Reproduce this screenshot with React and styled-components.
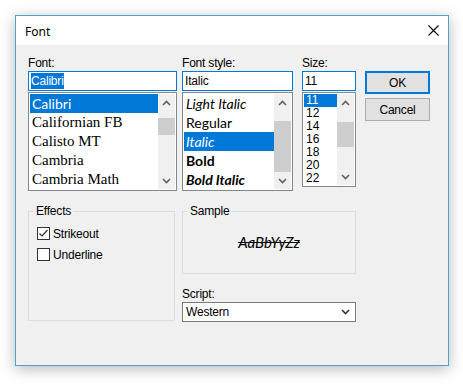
import React from "react";
import styled, { createGlobalStyle, css } from "styled-components";

const GlobalStyle = createGlobalStyle`
  html, body { margin: 0; padding: 0; background: #ffffff; }
  body {
    font-family: "Liberation Sans", Arial, sans-serif;
    font-size: 12px;
    color: #000;
  }
`;

const Page = styled.div`
  padding: 15px 0 0 15px;
  width: 463px;
  height: 384px;
  box-sizing: border-box;
`;

const Window = styled.div`
  width: 434px;
  height: 351px;
  box-sizing: border-box;
  border: 1px solid #4aa6c9;
  background: #f0f0f0;
  box-shadow: 0 3px 14px rgba(0, 0, 0, 0.28);
  display: flex;
  flex-direction: column;
`;

const TitleBar = styled.div`
  height: 29px;
  background: #fff;
  display: flex;
  align-items: center;
  justify-content: space-between;
  padding: 0 9px 0 9px;
  font-size: 12px;
`;

const Title = styled.span`
  font-family: "Noto Sans", "Liberation Sans", sans-serif;
  font-size: 12px;
  padding-top: 1px;
`;

const Content = styled.div`
  padding: 11px 0 0 12px;
  display: flex;
  flex-direction: column;
`;

const TopRow = styled.div`
  display: flex;
  align-items: flex-start;
`;

const Column = styled.div`
  width: ${(p) => p.$w}px;
  margin-right: ${(p) => p.$gap || 0}px;
  display: flex;
  flex-direction: column;
`;

const Label = styled.div`
  height: 15px;
  line-height: 14px;
  letter-spacing: -0.2px;
`;

const Input = styled.div`
  height: 20px;
  box-sizing: border-box;
  border: 1px solid #0078d7;
  background: #fff;
  padding: 0 2px;
  display: flex;
  align-items: center;
  letter-spacing: -0.2px;
`;

const Selected = styled.span`
  background: #0078d7;
  color: #fff;
  padding: 1px 0;
`;

const ListBox = styled.div`
  margin-top: 1px;
  height: ${(p) => p.$h}px;
  box-sizing: border-box;
  border: 1px solid #828790;
  background: #fff;
  padding: 1px;
  display: flex;
`;

const Rows = styled.div`
  flex: 1;
  overflow: hidden;
`;

const Row = styled.div`
  height: ${(p) => p.$h}px;
  line-height: ${(p) => p.$h}px;
  padding-left: 2px;
  white-space: nowrap;
  overflow: hidden;
  ${(p) =>
    p.$sel &&
    css`
      background: #0078d7;
      color: #fff;
    `}
`;

const SerifRow = styled(Row)`
  font-family: "Liberation Serif", "Times New Roman", serif;
  font-size: 15px;
`;

const CalibriRow = styled(Row)`
  font-family: Lato, "Open Sans", sans-serif;
  font-size: 14px;
  font-style: ${(p) => (p.$italic ? "italic" : "normal")};
  font-weight: ${(p) => p.$weight || 400};
`;

const SizeRow = styled(Row)`
  font-size: 12px;
`;

const ScrollBar = styled.div`
  width: 17px;
  background: #f0f0f0;
  display: flex;
  flex-direction: column;
  align-items: center;
`;

const ArrowBox = styled.div`
  height: 17px;
  width: 17px;
  display: flex;
  align-items: center;
  justify-content: center;
`;

const Track = styled.div`
  flex: 1;
  width: 17px;
  display: flex;
  flex-direction: column;
`;

const Thumb = styled.div`
  margin-top: ${(p) => p.$top}px;
  height: ${(p) => p.$h}px;
  width: 17px;
  background: #cdcdcd;
`;

const ButtonCol = styled.div`
  width: 65px;
  display: flex;
  flex-direction: column;
  padding-top: 15px;
  gap: 4px;
`;

const Button = styled.div`
  height: 23px;
  box-sizing: border-box;
  background: #e1e1e1;
  border: ${(p) => (p.$default ? "2px solid #0078d7" : "1px solid #adadad")};
  display: flex;
  align-items: center;
  justify-content: center;
  letter-spacing: -0.2px;
`;

const BottomRow = styled.div`
  display: flex;
  align-items: flex-start;
  margin-top: 20px;
`;

const Group = styled.div`
  position: relative;
  width: ${(p) => p.$w}px;
  height: ${(p) => p.$h}px;
  box-sizing: border-box;
  border: 1px solid #dcdcdc;
  margin-right: ${(p) => p.$gap || 0}px;
`;

const GroupTitle = styled.span`
  position: absolute;
  top: -8px;
  left: 5px;
  padding: 0 2px;
  background: #f0f0f0;
  line-height: 14px;
  letter-spacing: -0.2px;
`;

const CheckList = styled.div`
  padding: 15px 0 0 8px;
  display: flex;
  flex-direction: column;
  gap: 8px;
`;

const CheckRow = styled.div`
  display: flex;
  align-items: center;
  gap: 3px;
  height: 13px;
  letter-spacing: -0.2px;
`;

const Box = styled.div`
  width: 13px;
  height: 13px;
  box-sizing: border-box;
  border: 1px solid #333;
  background: #fff;
  display: flex;
  align-items: center;
  justify-content: center;
`;

const RightCol = styled.div`
  display: flex;
  flex-direction: column;
  width: 174px;
`;

const SampleArea = styled.div`
  height: 100%;
  display: flex;
  align-items: center;
  justify-content: center;
  padding-bottom: 2px;
  box-sizing: border-box;
`;

const SampleText = styled.span`
  font-family: Lato, "Open Sans", sans-serif;
  font-style: italic;
  font-size: 15px;
  text-decoration: line-through;
  color: #000;
`;

const ScriptLabel = styled(Label)`
  margin-top: 13px;
`;

const Combo = styled.div`
  height: 20px;
  box-sizing: border-box;
  border: 1px solid #7a7a7a;
  background: #fff;
  display: flex;
  align-items: center;
  justify-content: space-between;
  padding: 0 5px 0 3px;
  letter-spacing: -0.2px;
`;

const Chevron = ({ up, color = "#606060" }) => (
  <svg width="9" height="6" viewBox="0 0 9 6">
    <polyline
      points={up ? "1,5 4.5,1.5 8,5" : "1,1 4.5,4.5 8,1"}
      fill="none"
      stroke={color}
      strokeWidth="1.6"
    />
  </svg>
);

const ScrollBarView = ({ top, h }) => (
  <ScrollBar>
    <ArrowBox>
      <Chevron up />
    </ArrowBox>
    <Track>
      <Thumb $top={top} $h={h} />
    </Track>
    <ArrowBox>
      <Chevron />
    </ArrowBox>
  </ScrollBar>
);

const fonts = [
  { name: "Calibri", family: "calibri" },
  { name: "Californian FB" },
  { name: "Calisto MT" },
  { name: "Cambria" },
  { name: "Cambria Math" },
];

const styles = [
  { name: "Light Italic", italic: true, weight: 400 },
  { name: "Regular" },
  { name: "Italic", italic: true, sel: true },
  { name: "Bold", weight: 700 },
  { name: "Bold Italic", italic: true, weight: 700 },
];

const sizes = ["11", "12", "14", "16", "18", "20", "22"];

export default function App() {
  return (
    <Page>
      <GlobalStyle />
      <Window>
        <TitleBar>
          <Title>Font</Title>
          <svg width="11" height="11" viewBox="0 0 11 11">
            <path d="M0.5 0.5 L10.5 10.5 M10.5 0.5 L0.5 10.5" stroke="#000" strokeWidth="1.1" />
          </svg>
        </TitleBar>
        <Content>
          <TopRow>
            <Column $w={149} $gap={5}>
              <Label>Font:</Label>
              <Input>
                <Selected>Calibri</Selected>
              </Input>
              <ListBox $h={99}>
                <Rows>
                  {fonts.map((f, i) =>
                    f.family ? (
                      <CalibriRow key={f.name} $h={19} $sel={i === 0}>
                        {f.name}
                      </CalibriRow>
                    ) : (
                      <SerifRow key={f.name} $h={19}>
                        {f.name}
                      </SerifRow>
                    )
                  )}
                </Rows>
                <ScrollBarView top={7} h={17} />
              </ListBox>
            </Column>
            <Column $w={111} $gap={9}>
              <Label>Font style:</Label>
              <Input>Italic</Input>
              <ListBox $h={99}>
                <Rows>
                  {styles.map((s) => (
                    <CalibriRow
                      key={s.name}
                      $h={19}
                      $sel={s.sel}
                      $italic={s.italic}
                      $weight={s.weight}
                    >
                      {s.name}
                    </CalibriRow>
                  ))}
                </Rows>
                <ScrollBarView top={10} h={51} />
              </ListBox>
            </Column>
            <Column $w={54} $gap={9}>
              <Label>Size:</Label>
              <Input>11</Input>
              <ListBox $h={95}>
                <Rows>
                  {sizes.map((s, i) => (
                    <SizeRow key={s} $h={13} $sel={i === 0}>
                      {s}
                    </SizeRow>
                  ))}
                </Rows>
                <ScrollBarView top={11} h={25} />
              </ListBox>
            </Column>
            <ButtonCol>
              <Button $default>OK</Button>
              <Button>Cancel</Button>
            </ButtonCol>
          </TopRow>
          <BottomRow>
            <Group $w={147} $h={110} $gap={7}>
              <GroupTitle>Effects</GroupTitle>
              <CheckList>
                <CheckRow>
                  <Box>
                    <svg width="11" height="11" viewBox="0 0 11 11">
                      <polyline points="1.5,5.5 4,8 9.5,2" fill="none" stroke="#333" strokeWidth="1.2" />
                    </svg>
                  </Box>
                  Strikeout
                </CheckRow>
                <CheckRow>
                  <Box />
                  Underline
                </CheckRow>
              </CheckList>
            </Group>
            <RightCol>
              <Group $w={174} $h={63}>
                <GroupTitle>Sample</GroupTitle>
                <SampleArea>
                  <SampleText>AaBbYyZz</SampleText>
                </SampleArea>
              </Group>
              <ScriptLabel>Script:</ScriptLabel>
              <Combo>
                Western
                <Chevron color="#333" />
              </Combo>
            </RightCol>
          </BottomRow>
        </Content>
      </Window>
    </Page>
  );
}
